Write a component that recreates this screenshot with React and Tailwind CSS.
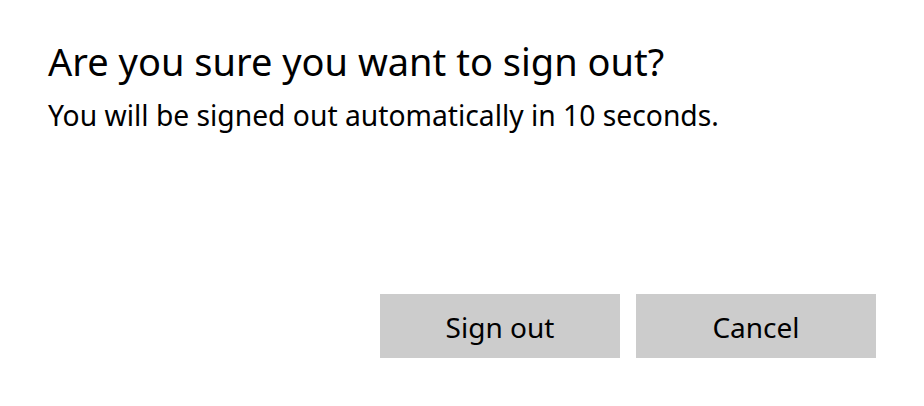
export default function App() {
  return (
    <div className="flex h-[406px] w-[924px] flex-col bg-white px-12 text-black [font-family:'Noto_Sans',sans-serif]">
      <h1 className="mt-[35px] text-[38px] leading-[52px] font-normal">
        Are you sure you want to sign out?
      </h1>
      <p className="mt-[11px] text-[28.25px] leading-[34px]">
        You will be signed out automatically in 10 seconds.
      </p>
      <div className="mt-auto mb-[48px] flex justify-end gap-4">
        <button
          type="button"
          className="h-16 w-60 bg-[#cccccc] pt-[2px] text-[28px] text-black"
        >
          Sign out
        </button>
        <button
          type="button"
          className="h-16 w-60 bg-[#cccccc] pt-[2px] text-[28px] text-black"
        >
          Cancel
        </button>
      </div>
    </div>
  );
}
